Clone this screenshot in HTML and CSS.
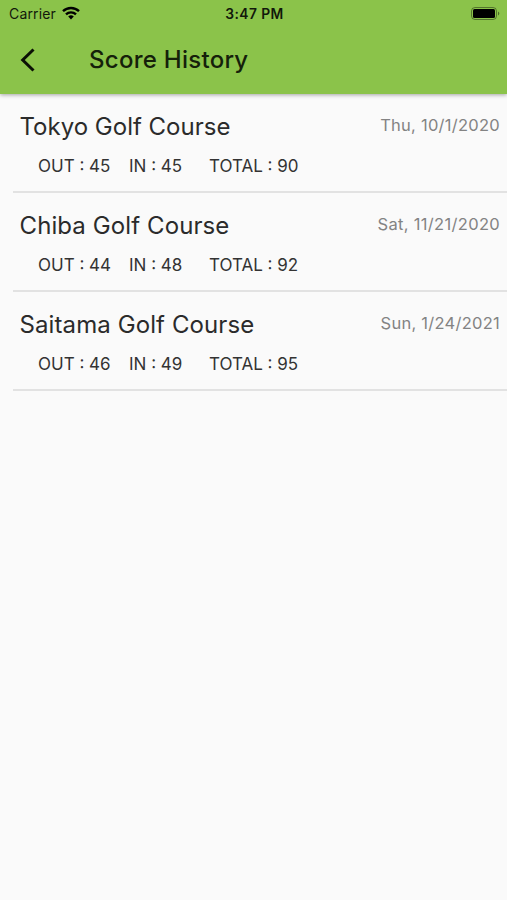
FILE: index.html
```html
<!DOCTYPE html>
<html lang="en">
<head>
<meta charset="utf-8">
<title>Score History</title>
<link rel="stylesheet" href="styles.css">
</head>
<body>
<header class="header">
  <div class="status">
    <div class="carrier"><span class="carrier-name">Carrier</span>
      <svg class="wifi" width="18" height="14" viewBox="0 0 18 14"><g fill="none" stroke="#000" stroke-width="2.4"><path d="M1 5.200a11.500 11.500 0 0 1 16 0"/><path d="M4 8.400a7.200 7.200 0 0 1 10 0"/></g><path d="M9 13.400L6.200 10.600a4 4 0 0 1 5.600 0z"/></svg>
    </div>
    <div class="time">3:47 PM</div>
    <svg class="battery" width="29" height="13" viewBox="0 0 29 13"><rect x=".5" y=".5" width="25" height="12" rx="3.5" fill="none" stroke="#000" stroke-opacity=".4"/><rect x="2" y="2" width="22" height="9" rx="1.5"/><path d="M27 4.500a2.200 2.200 0 0 1 0 4z" fill-opacity=".45"/></svg>
  </div>
  <div class="bar">
    <svg class="back" width="16" height="24" viewBox="0 0 16 24"><path d="M13.500 1.500L2.700 12l10.800 10.500" fill="none" stroke="#0b1005" stroke-width="3"/></svg>
    <h1 class="title">Score History</h1>
  </div>
</header>
<main class="list">
  <article class="item">
    <div class="top"><h2 class="course tokyo">Tokyo Golf Course</h2><time class="date">Thu, 10/1/2020</time></div>
    <div class="scores"><span class="out">OUT : 45</span><span class="in">IN : 45</span><span class="total">TOTAL : 90</span></div>
  </article>
  <article class="item">
    <div class="top"><h2 class="course">Chiba Golf Course</h2><time class="date long">Sat, 11/21/2020</time></div>
    <div class="scores"><span class="out">OUT : 44</span><span class="in">IN : 48</span><span class="total">TOTAL : 92</span></div>
  </article>
  <article class="item">
    <div class="top"><h2 class="course">Saitama Golf Course</h2><time class="date">Sun, 1/24/2021</time></div>
    <div class="scores"><span class="out">OUT : 46</span><span class="in">IN : 49</span><span class="total">TOTAL : 95</span></div>
  </article>
</main>
</body>
</html>
```
FILE: styles.css
```css
* { box-sizing: border-box; }
body { margin: 0; min-height: 900px; background: #fafafa; color: #2b2b2b; font-family: Inter, sans-serif; }
h1, h2 { margin: 0; font-weight: 400; }
.header { height: 94px; background: #8bc34a; box-shadow: 0 1px 4px rgba(0,0,0,.35); }
.status { height: 27px; display: grid; grid-template-columns: 1fr auto 1fr; align-items: center; padding: 0 7px 0 9px; font-size: 14px; color: #12180b; }
.carrier { display: flex; align-items: center; gap: 6px; }
.carrier-name { letter-spacing: .15px; }
.wifi { margin-top: -2px; }
.time { font-weight: 600; font-size: 13.8px; letter-spacing: .45px; }
.battery { justify-self: end; }
.bar { height: 66px; display: flex; align-items: center; padding-left: 19.5px; }
.title { margin-left: 53.5px; font-size: 24px; line-height: 30px; font-weight: 450; letter-spacing: .27px; color: #15200a; }
.list { padding-left: 13px; }
.item { height: 99px; padding: 16px 7px 0 6.5px; border-bottom: 2px solid #e2e2e2; }
.top { display: flex; justify-content: space-between; align-items: center; height: 31px; }
.course { margin-top: 2px; font-size: 24px; letter-spacing: .1px; white-space: nowrap; }
.tokyo { letter-spacing: 0; }
.date { margin-top: -1px; font-size: 16.5px; color: #838383; letter-spacing: .26px; white-space: nowrap; }
.long { letter-spacing: .32px; }
.scores { display: flex; margin: 14px 0 0 18.5px; font-size: 17px; line-height: 22px; white-space: nowrap; color: #333; }
.out { width: 91px; }
.in { width: 80px; }
```
